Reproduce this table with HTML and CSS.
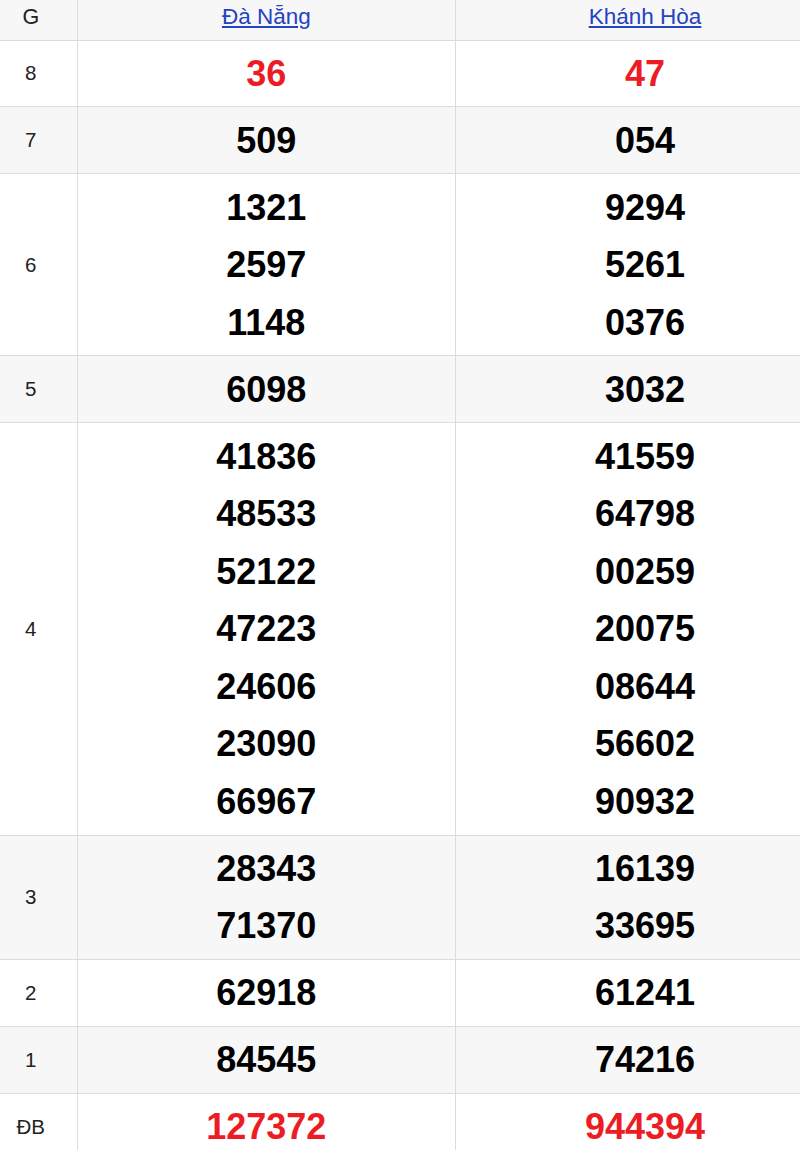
FILE: index.html
```html
<!DOCTYPE html>
<html lang="vi">
<head>
<meta charset="utf-8">
<title>Kết quả xổ số</title>
<link rel="stylesheet" href="styles.css">
</head>
<body>
<table class="kq">
  <colgroup>
    <col class="c-label">
    <col class="c-prov">
    <col class="c-prov">
  </colgroup>
  <thead>
    <tr class="head">
      <th class="label">G</th>
      <th><a href="#">Đà Nẵng</a></th>
      <th><a href="#">Khánh Hòa</a></th>
    </tr>
  </thead>
  <tbody>
    <tr>
      <td class="label">8</td>
      <td class="num red"><div>36</div></td>
      <td class="num red"><div>47</div></td>
    </tr>
    <tr class="alt">
      <td class="label">7</td>
      <td class="num"><div>509</div></td>
      <td class="num"><div>054</div></td>
    </tr>
    <tr>
      <td class="label">6</td>
      <td class="num"><div>1321</div><div>2597</div><div>1148</div></td>
      <td class="num"><div>9294</div><div>5261</div><div>0376</div></td>
    </tr>
    <tr class="alt">
      <td class="label">5</td>
      <td class="num"><div>6098</div></td>
      <td class="num"><div>3032</div></td>
    </tr>
    <tr>
      <td class="label">4</td>
      <td class="num"><div>41836</div><div>48533</div><div>52122</div><div>47223</div><div>24606</div><div>23090</div><div>66967</div></td>
      <td class="num"><div>41559</div><div>64798</div><div>00259</div><div>20075</div><div>08644</div><div>56602</div><div>90932</div></td>
    </tr>
    <tr class="alt">
      <td class="label">3</td>
      <td class="num"><div>28343</div><div>71370</div></td>
      <td class="num"><div>16139</div><div>33695</div></td>
    </tr>
    <tr>
      <td class="label">2</td>
      <td class="num"><div>62918</div></td>
      <td class="num"><div>61241</div></td>
    </tr>
    <tr class="alt">
      <td class="label">1</td>
      <td class="num"><div>84545</div></td>
      <td class="num"><div>74216</div></td>
    </tr>
    <tr>
      <td class="label">ĐB</td>
      <td class="num red"><div>127372</div></td>
      <td class="num red"><div>944394</div></td>
    </tr>
  </tbody>
</table>
</body>
</html>
```

FILE: styles.css
```css
html, body {
  margin: 0;
  padding: 0;
  overflow: hidden;
  background: #ffffff;
}

body {
  font-family: "Liberation Sans", Arial, sans-serif;
  color: #000;
}

.kq {
  width: 849px;
  margin-left: -15px;
  border-collapse: collapse;
  table-layout: fixed;
}

.c-label { width: 92px; }
.c-prov { width: 378px; }

.kq th,
.kq td {
  border-bottom: 1px solid #dcdcdc;
  border-left: 1px solid #dcdcdc;
  text-align: center;
  vertical-align: middle;
  padding: 0;
}

.kq th.label,
.kq td.label {
  border-left: none;
  font-size: 20.5px;
  font-weight: normal;
  color: #222;
}

.head th {
  height: 40px;
  padding-bottom: 5px;
  box-sizing: border-box;
  background: #f7f7f7;
  font-weight: normal;
  font-size: 22.5px;
}

.head th.label {
  font-size: 21.5px;
}

.head a {
  color: #2442c4;
  text-decoration: underline;
  text-underline-offset: 2px;
}

.alt td {
  background: #f7f7f7;
}

.num {
  padding: 4.2px 0 !important;
  font-size: 36px;
  font-weight: bold;
  line-height: 57.56px;
  color: #000;
}

.num.red {
  color: #ec1c24;
}
```
